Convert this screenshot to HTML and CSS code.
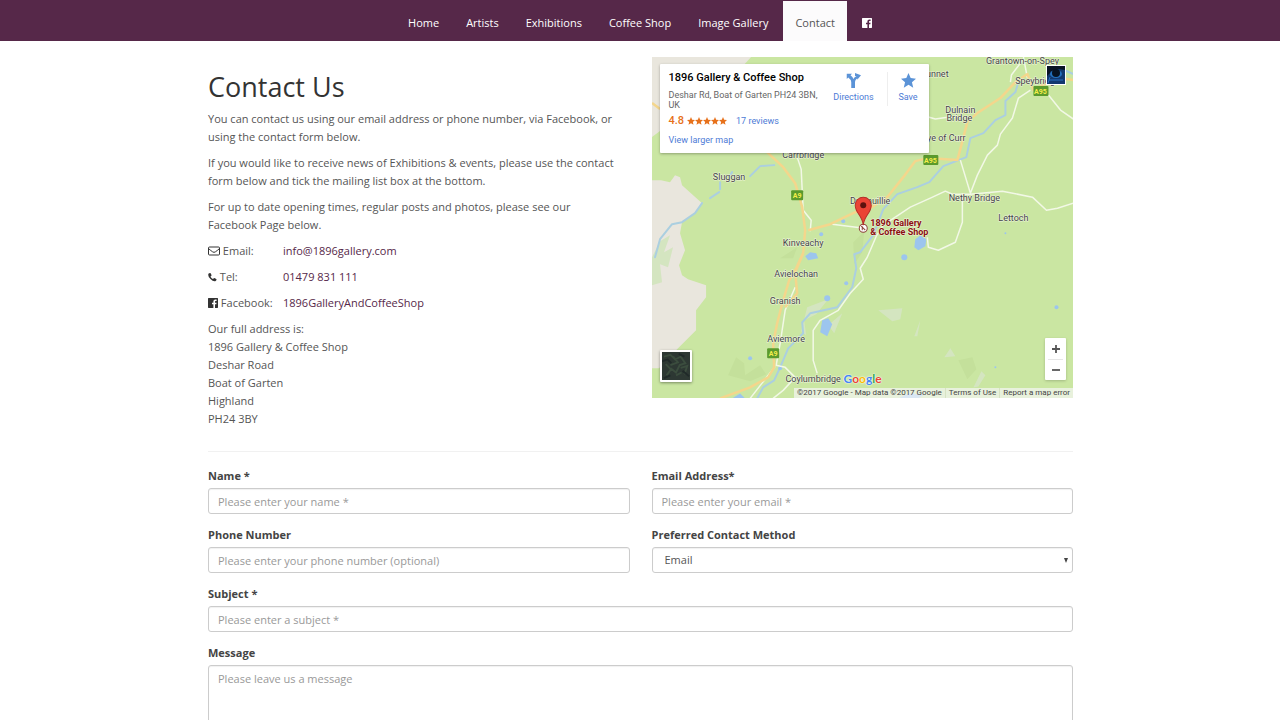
FILE: index.html
```html
<!DOCTYPE html>
<html lang="en">
<head>
<meta charset="utf-8">
<meta name="viewport" content="width=device-width, initial-scale=1">
<title>Contact Us - 1896 Gallery &amp; Coffee Shop</title>
<link rel="stylesheet" href="styles.css">
</head>
<body>
<nav class="navbar" aria-label="Main">
  <a href="#">Home</a>
  <a href="#">Artists</a>
  <a href="#">Exhibitions</a>
  <a href="#">Coffee Shop</a>
  <a href="#">Image Gallery</a>
  <a href="#" class="active" aria-current="page">Contact</a>
  <a href="#" aria-label="Facebook"><svg class="icon" viewBox="0 0 20 20"><path fill="currentColor" fill-rule="evenodd" d="M1 0h18l1 1v18l-1 1h-5v-7.500h2.700l.4-3.100H14V7.500c0-1 .3-1.500 1.600-1.500h1.600V3.200c-.3 0-1.300-.1-2.400-.1-2.400 0-4 1.400-4 4.100v2.200H8v3.100h2.800V20H1l-1-1V1z"/></svg></a>
</nav>

<main class="container">
  <section class="columns">
    <div class="details">
      <h1>Contact Us</h1>
      <p>You can contact us using our email address or phone number, via Facebook, or using the contact form below.</p>
      <p>If you would like to receive news of Exhibitions &amp; events, please use the contact form below and tick the mailing list box at the bottom.</p>
      <p>For up to date opening times, regular posts and photos, please see our <br>Facebook Page below.</p>
      <dl class="channels">
        <dt><svg class="icon wide" viewBox="0 0 24 20"><path fill="none" stroke="currentColor" stroke-width="2" stroke-linejoin="round" d="M1 4Q1 2 3 2H21Q23 2 23 4V16Q23 18 21 18H3Q1 18 1 16ZM1 5Q4 8 9 11.500Q12 14 15 11.500Q20 8 23 5"/></svg> Email:</dt>
        <dd><a href="#">info@1896gallery.com</a></dd>
        <dt><svg class="icon phone" viewBox="0 0 20 20"><path fill="currentColor" d="M1 3Q2 1 5 1Q6 1 8 6Q8 7 6 8.500Q5.500 9 6 10Q8 13 11 14.500L13 12.500Q14 12 19 15Q19 18 17 19Q12 21 5.500 14.500Q-1 8 1 3Z"/></svg> Tel:</dt>
        <dd><a href="#">01479 831 111</a></dd>
        <dt><svg class="icon" viewBox="0 0 20 20"><path fill="currentColor" fill-rule="evenodd" d="M1 0h18l1 1v18l-1 1h-5v-7.500h2.700l.4-3.100H14V7.500c0-1 .3-1.500 1.600-1.500h1.600V3.200c-.3 0-1.300-.1-2.400-.1-2.400 0-4 1.400-4 4.100v2.200H8v3.100h2.800V20H1l-1-1V1z"/></svg> Facebook:</dt>
        <dd><a href="#">1896GalleryAndCoffeeShop</a></dd>
      </dl>
      <address>Our full address is:<br>1896 Gallery &amp; Coffee Shop<br>Deshar Road<br>Boat of Garten<br>Highland<br>PH24 3BY</address>
    </div>

    <div class="map">
      <svg class="map-canvas" viewBox="0 0 421 341" role="img" aria-label="Map of Boat of Garten">
        <defs>
          <clipPath id="frame"><rect width="421" height="341"/></clipPath>
        </defs>
        <g clip-path="url(#frame)">
          <rect width="421" height="341" fill="#cae6a2"/>
          <g fill="#e9e6dd">
            <path d="M0 0H99L88 12L8 74L0 80Z"/>
            <path d="M0 123L9 123L18 125L23 118L28 120L30 128L50 146L43 156L30 165L28 176L33 193L27 208L30 218L36 222L54 228V240L44 253V273L26 291L7 311H0Z"/>
          </g>
          <g fill="#d4e5c0">
            <path d="M0 200L8 184L18 178L12 195L21 190L16 210L8 207L10 225L0 228Z"/>
            <path d="M226 253L250 251L248 262L240 264Z M262 279L268 263L265 279Z M292 300L298 291L303 299Z M321 330L329 314L333 318L326 329Z"/>
            <path d="M155 250L176 242L164 257L152 263L154 278L149 274Z M176 268L190 256L182 276Z"/>
          </g>
          <g fill="#c4e09b">
            <path d="M76 318L84 300L92 306L93 318L108 308L114 317L98 324Z M306 303L320 300L324 312L315 322Z"/>
            <path d="M128 201L145 190L141 201Z M201 185L212 174L210 195L202 207Z"/>
          </g>
          <g class="rivers">
            <path d="M50 146L43 156L30 165L20 167L8 182L3 200M58 141L67 135M68 132V125M77 120L80 115M98 119L108 109L122 108"/>
            <path d="M421 17L414 14M366 25L363 35L353 44V58L343 63L331 76L318 81L314 100L291 109L277 125L265 130L245 137L231 152L221 178L208 195L202 197L204 211L200 230L185 250L158 256L150 265L151 276L136 291L128 310L122 323L111 330L105 341"/>
          </g>
          <g fill="#9cc5ee">
            <path d="M153 199L158 195L164 196L166 201L156 203Z"/>
            <path d="M170 263L176 261L180 267L175 279L168 275Z"/>
            <path d="M263 182L268 178L274 182L273 189L266 193L262 190Z"/>
            <circle cx="252" cy="200" r="3"/><circle cx="175" cy="241" r="3"/><circle cx="194" cy="226" r="2"/><circle cx="191" cy="164" r="2"/><circle cx="169" cy="177" r="2"/><circle cx="98" cy="301" r="2"/><circle cx="404" cy="250" r="2"/><circle cx="128" cy="311" r="2"/><circle cx="343" cy="310" r="1"/><circle cx="353" cy="176" r="1"/>
            <path d="M80 341L88 336L93 341Z M246 341L256 336L272 337L266 341Z"/>
          </g>
          <g class="lanes">
            <path d="M276 60L283 62L297 60H320"/>
            <path d="M371 0L375 21M371 2L359 18L358 25"/>
            <path d="M378 33L366 41L360 61L348 77L345 88L335 98L325 118L318 136L308 103"/>
            <path d="M396 38L408 53L421 62"/>
            <path d="M243 160L258 150L278 141L293 134L300 137L318 137L350 134L380 140L394 153L405 151L421 146"/>
            <path d="M310 136V165L303 185L286 193L276 190L275 180"/>
            <path d="M243 160L231 168L224 179L215 200L208 211L211 222L198 236L186 253L168 263L161 273V303L165 316"/>
            <path d="M145 100L149 112L151 153L159 163L158 174M180 167L212 171"/>
            <path d="M143 230L133 253L128 286L124 308L133 310L143 320L131 333L121 341M123 309L98 341"/>
          </g>
          <g class="trunk-roads">
            <path d="M105 84L116 96L131 110L143 126L150 150L153 173L151 196L143 213L137 223L131 243L125 266L121 286L122 310L116 320L98 330L68 341"/>
            <path d="M151 196L143 215L145 236L133 250M156 173L178 167L203 155L218 151L235 140L251 120L263 104L275 101L305 103L309 88L315 65L325 56L348 41L363 25L375 17L381 33L394 26L408 21L421 23M0 46L8 52"/>
          </g>
          <g class="road-signs">
            <rect x="139" y="133" width="12" height="10" rx="1"/><rect x="115" y="291" width="12" height="10" rx="1"/><rect x="271" y="98" width="15" height="10" rx="1"/><rect x="381" y="29" width="15" height="10" rx="1"/>
            <text x="145" y="141">A9</text><text x="121" y="299">A9</text><text x="278" y="106">A95</text><text x="388" y="37">A95</text>
          </g>
          <g class="places">
            <text x="370" y="7">Grantown-on-Spey</text>
            <text x="385" y="27">Speybridge</text>
            <text x="282" y="20">Dunnet</text>
            <text x="308" y="56">Dulnain</text>
            <text x="307" y="64">Bridge</text>
            <text x="289" y="84">Skye of Curr</text>
            <text x="151" y="101">Carrbridge</text>
            <text x="77" y="123">Sluggan</text>
            <text x="218" y="147">Drumuillie</text>
            <text x="322" y="144">Nethy Bridge</text>
            <text x="361" y="164">Lettoch</text>
            <text x="151" y="189">Kinveachy</text>
            <text x="144" y="220">Avielochan</text>
            <text x="133" y="247">Granish</text>
            <text x="134" y="285">Aviemore</text>
            <text x="161" y="325">Coylumbridge</text>
          </g>
          <circle cx="211" cy="171" r="4" fill="#fff" stroke="#8b4038"/>
          <path d="M209 169L213 173M210 173V169" stroke="#8b4038" fill="none"/>
          <path d="M211 168C210 158 203 156 203 148A8 8 0 0 1 219 148C219 156 212 158 211 168Z" fill="#ea4335" stroke="#b4302a"/>
          <circle cx="211" cy="148" r="3" fill="#5c120e"/>
          <g class="poi"><text x="218" y="169">1896 Gallery</text><text x="218" y="178">&amp; Coffee Shop</text></g>
        </g>
      </svg>

      <div class="place-card">
        <div class="place-info">
          <h2>1896 Gallery &amp; Coffee Shop</h2>
          <div class="place-address">Deshar Rd, Boat of Garten PH24 3BN, UK</div>
          <div class="rating"><b>4.8</b>
            <svg class="stars" viewBox="0 0 100 20" aria-label="Five stars"><defs><path id="star" d="M10 0L12.900 6.800L20 7.500L14.600 12.200L16.300 19.500L10 15.600L3.700 19.500L5.400 12.200L0 7.500L7.100 6.800Z"/></defs><g fill="#e7711b"><use href="#star"/><use href="#star" x="20"/><use href="#star" x="40"/><use href="#star" x="60"/><use href="#star" x="80"/></g></svg>
            <a href="#">17 reviews</a></div>
          <a class="larger" href="#">View larger map</a>
        </div>
        <a class="action" href="#"><svg viewBox="0 0 20 20"><path fill="#5b93d7" d="M7 20V12Q7 9 3 6L1 8V1H8L6 3Q9 5 10 8Q11 5 14 4H12V0L20 3L15 9V7Q12 9 12 12V20Z"/></svg>Directions</a>
        <a class="action save" href="#"><svg viewBox="0 0 20 20"><use href="#star" fill="#5b93d7"/></svg>Save</a>
      </div>

      <a class="profile" href="#" aria-label="Account"><svg viewBox="0 0 18 18"><rect width="18" height="18" fill="#12386f"/><path d="M0 0H18V4L12 3L5 5L0 10Z" fill="#0a1425"/><ellipse cx="9" cy="8" rx="6" ry="4" fill="#2370bd"/><circle cx="9" cy="7" r="4" fill="#071323"/><path d="M2 14H16M3 11L1 17" stroke="#286fc1"/></svg></a>
      <button class="satellite" aria-label="Show satellite imagery"><svg viewBox="0 0 30 30"><rect width="30" height="30" fill="#2d3833"/><path d="M2 5L9 3L14 8L20 5L25 12L19 14L15 22L10 18L5 25M12 5L17 11L9 14M20 17L27 15L24 24M4 13L9 18M15 25L21 22" fill="none" stroke="#3b4d3e" stroke-width="2"/><path d="M0 10L6 8L10 12M18 2L24 5M22 20L29 26M2 28L9 25" stroke="#202a29" stroke-width="2" fill="none"/></svg></button>
      <div class="zoom">
        <button aria-label="Zoom in"><svg viewBox="0 0 9 9"><path d="M0 4.500H9M4.500 0V9" stroke="#555" stroke-width="2"/></svg></button>
        <button aria-label="Zoom out"><svg viewBox="0 0 9 9"><path d="M0 4.500H9" stroke="#555" stroke-width="2"/></svg></button>
      </div>
      <div class="google" aria-label="Google"><span class="b">G</span><span class="r">o</span><span class="y">o</span><span class="b">g</span><span class="g">l</span><span class="r">e</span></div>
      <div class="legal"><span>©2017 Google - Map data ©2017 Google</span><a href="#">Terms of Use</a><a href="#">Report a map error</a></div>
    </div>
  </section>

  <hr>

  <form class="contact-form">
    <div class="field"><label for="name">Name *</label><input id="name" type="text" placeholder="Please enter your name *"></div>
    <div class="field"><label for="email">Email Address*</label><input id="email" type="email" placeholder="Please enter your email *"></div>
    <div class="field"><label for="phone">Phone Number</label><input id="phone" type="tel" placeholder="Please enter your phone number (optional)"></div>
    <div class="field"><label for="method">Preferred Contact Method</label><div class="select-wrap"><select id="method"><option>Email</option><option>Phone</option></select></div></div>
    <div class="field full"><label for="subject">Subject *</label><input id="subject" type="text" placeholder="Please enter a subject *"></div>
    <div class="field full"><label for="message">Message</label><textarea id="message" rows="6" placeholder="Please leave us a message"></textarea></div>
  </form>
</main>
</body>
</html>
```

FILE: styles.css
```css
* { box-sizing: border-box; }
html { scrollbar-width: none; }
body {
  margin: 0;
  background: #fff;
  color: #555;
  font: 11px/18px "Open Sans", "Noto Sans", sans-serif;
}
a { color: #562849; text-decoration: none; }

.navbar {
  display: flex;
  justify-content: center;
  gap: 3px;
  min-height: 41px;
  padding-top: 1px;
  background: #562849;
}
.navbar a {
  display: flex;
  align-items: center;
  padding: 3px 12px 0;
  color: #fff;
}
.navbar .active { background: #fcfbfc; color: #555; }
.icon { width: 10px; height: 10px; vertical-align: -1px; color: #333; }
.icon.wide { width: 12px; }
.icon.phone { width: 9px; }
.navbar .icon { color: #fff; }

.container { max-width: 866px; margin: 0 auto; padding-left: 1px; }
.columns, .contact-form {
  display: grid;
  grid-template-columns: 1fr 1fr;
  column-gap: 22px;
}
.columns { align-items: start; padding-top: 16px; }
h1 {
  margin: 15px 0 8px;
  color: #333;
  font-size: 27px;
  font-weight: 400;
  line-height: 30px;
}
p { margin: 0 0 8px; }
.channels {
  display: grid;
  grid-template-columns: 75px 1fr;
  row-gap: 8px;
  margin: 0 0 8px;
}
.channels dd { margin: 0; }
address { font-style: normal; }
hr { margin: 23px 0 15px; border: 0; border-top: 1px solid #f1f1f1; }

.map { position: relative; font-family: Roboto, sans-serif; overflow: hidden; }
.map a { color: #4d7bd6; }
.map-canvas { display: block; width: 100%; height: auto; }
.rivers { fill: none; stroke: #abcfe0; stroke-width: 2px; stroke-linejoin: round; stroke-linecap: round; }
.lanes { fill: none; stroke: #f2f8e6; stroke-width: 1.5px; stroke-linejoin: round; }
.trunk-roads { fill: none; stroke: #f4d68c; stroke-width: 2.5px; stroke-linejoin: round; }
.road-signs rect { fill: #5b9a2d; }
.road-signs text { fill: #f6ee4a; font-size: 7px; font-weight: 700; text-anchor: middle; }
.places { fill: #444; stroke: #eef5df; stroke-width: 1px; paint-order: stroke; font-size: 9px; text-anchor: middle; }
.poi { fill: #8b1010; stroke: #eef5df; stroke-width: 1px; paint-order: stroke; font-size: 9px; font-weight: 700; }

.place-card {
  position: absolute;
  top: 7px;
  left: 8px;
  display: flex;
  width: 269px;
  padding: 8px 0 6px 9px;
  background: #fff;
  border-radius: 1px;
  box-shadow: 0 1px 3px rgba(0, 0, 0, .3);
  color: #666;
  font-size: 9px;
  line-height: 10px;
}
.place-info { width: 158px; }
.place-card h2 { margin: 0 0 6px; color: #000; font-size: 11px; font-weight: 500; line-height: 12px; }
.rating { display: flex; align-items: center; margin: 5px 0 6px; line-height: 12px; }
.rating b { color: #e7711b; font-size: 11px; font-weight: 500; }
.stars { width: 42px; height: 8px; margin: 0 8px 0 2px; }
.larger { display: block; line-height: 14px; }
.action { display: flex; flex-direction: column; align-items: center; gap: 4px; width: 54px; padding-top: 1px; height: 34px; }
.action svg { width: 15px; height: 15px; }
.action.save { width: 42px; margin-left: 6px; border-left: 1px solid #eee; }

.profile { position: absolute; top: 8px; right: 7px; width: 20px; height: 20px; border: 1px solid #fff; }
.profile svg, .satellite svg { display: block; width: 100%; height: 100%; }
.map button { padding: 0; border: 0; background: #fff; }
.map .satellite { position: absolute; left: 8px; bottom: 16px; width: 32px; height: 32px; padding: 2px; border-radius: 1px; box-shadow: 0 1px 3px rgba(0, 0, 0, .4); }
.zoom { position: absolute; right: 7px; bottom: 18px; width: 21px; padding: 0 3px; background: #fff; border-radius: 1px; box-shadow: 0 1px 3px rgba(0, 0, 0, .2); }
.zoom button { display: grid; place-items: center; width: 100%; height: 21px; }
.zoom button + button { border-top: 1px solid #e6e6e6; }
.zoom svg { width: 8px; height: 8px; }
.google { position: absolute; left: 192px; bottom: 11px; font: 700 12px/16px Lato, sans-serif; text-shadow: 0 0 1px #fff, 0 0 2px #fff; }
.b { color: #4285f4; }
.r { color: #ea4335; }
.y { color: #fbbc05; }
.g { color: #34a853; }
.legal { position: absolute; right: 0; bottom: 0; display: flex; background: rgba(245, 245, 245, .7); color: #444; font-size: 8px; line-height: 10px; }
.legal > * { padding: 0 3px; }
.legal a { color: #444; border-left: 1px solid #d7e3c4; }

.contact-form { row-gap: 12px; }
.full { grid-column: 1 / -1; }
label { display: block; margin-bottom: 3px; color: #444; font-weight: 700; }
input, select, textarea {
  display: block;
  width: 100%;
  height: 26px;
  padding: 0 9px;
  border: 1px solid #ccc;
  border-radius: 3px;
  background: #fff;
  color: #555;
  font: inherit;
  box-shadow: inset 0 1px 1px rgba(0, 0, 0, .06);
}
textarea { height: 114px; padding-top: 4px; resize: none; }
::placeholder { color: #999; opacity: 1; }
select { appearance: none; padding-left: 12px; }
.select-wrap { position: relative; }
.select-wrap::after {
  content: "";
  position: absolute;
  top: 11px;
  right: 5px;
  border: 2px solid transparent;
  border-top: 5px solid #444;
  border-bottom: 0;
  pointer-events: none;
}

@media (max-width: 760px) {
  .navbar { flex-wrap: wrap; }
  .container { padding: 0 16px; }
  .columns, .contact-form { grid-template-columns: 1fr; }
}
```
